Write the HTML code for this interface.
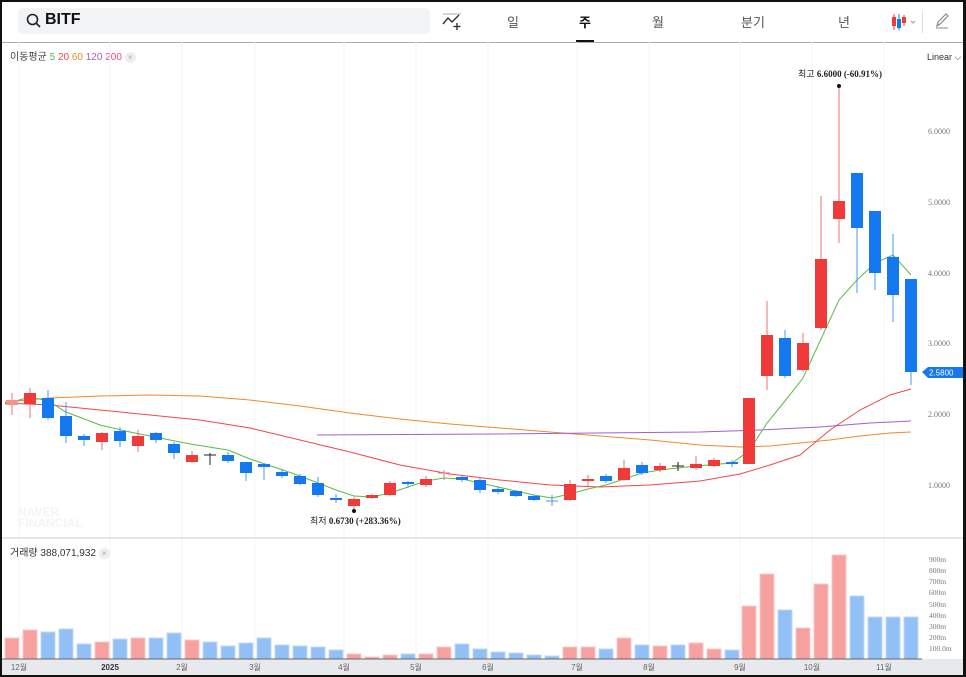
<!DOCTYPE html>
<html><head><meta charset="utf-8"><style>
*{margin:0;padding:0;box-sizing:border-box}
html,body{width:966px;height:677px;overflow:hidden;background:#111}
#f{position:absolute;left:2px;top:2px;width:961px;height:673px;background:#fff;overflow:hidden;font-family:"Liberation Sans","Noto Sans CJK KR",sans-serif}
.t{position:absolute;font-size:11px;color:#333}
</style></head><body><div id="f">
<div style="position:absolute;left:16px;top:6px;width:412px;height:26px;background:#f2f3f5;border-radius:5px"></div>
<svg style="position:absolute;left:24px;top:11px" width="16" height="16" viewBox="0 0 16 16"><circle cx="6.5" cy="6.5" r="5" fill="none" stroke="#222" stroke-width="1.6"/><line x1="10.2" y1="10.2" x2="14" y2="14" stroke="#222" stroke-width="1.6"/></svg>
<div class="t" style="left:43px;top:9px;font-size:16px;font-weight:bold;color:#111">BITF</div>
<svg style="position:absolute;left:440px;top:10px" width="22" height="20" viewBox="0 0 22 20"><line x1="1" y1="2" x2="19" y2="2" stroke="#aaa"/><polyline points="1,12 6,6 10,10 17,3" fill="none" stroke="#333" stroke-width="1.4"/><line x1="15" y1="11" x2="15" y2="18" stroke="#333" stroke-width="1.4"/><line x1="11.5" y1="14.5" x2="18.5" y2="14.5" stroke="#333" stroke-width="1.4"/></svg>
<div class="t" style="left:505px;top:10px;font-size:13px;color:#555">일</div>
<div class="t" style="left:577px;top:10px;font-size:13px;color:#111;font-weight:bold">주</div>
<div style="position:absolute;left:574px;top:38px;width:18px;height:3px;background:#111"></div>
<div class="t" style="left:650px;top:10px;font-size:13px;color:#555">월</div>
<div class="t" style="left:739px;top:10px;font-size:13px;color:#555">분기</div>
<div class="t" style="left:836px;top:10px;font-size:13px;color:#555">년</div>
<svg style="position:absolute;left:888px;top:10px" width="30" height="20"><line x1="4" y1="2" x2="4" y2="18" stroke="#f03a3a"/><rect x="2" y="5" width="4" height="9" fill="#f03a3a"/><line x1="9" y1="2" x2="9" y2="18" stroke="#1478f0"/><rect x="7" y="7" width="4" height="9" fill="#1478f0"/><line x1="14" y1="3" x2="14" y2="14" stroke="#f03a3a"/><rect x="12" y="5" width="4" height="6" fill="#f03a3a"/><polyline points="21,9 23,11 25,9" fill="none" stroke="#999"/></svg>
<div style="position:absolute;left:920px;top:9px;width:1px;height:22px;background:#ddd"></div>
<svg style="position:absolute;left:932px;top:10px" width="16" height="18"><path d="M3 14 L4 10 L12 2 L14 4 L6 12 Z" fill="none" stroke="#888" stroke-width="1.2"/><line x1="2" y1="16" x2="14" y2="16" stroke="#888"/></svg>
<div style="position:absolute;left:0;top:40px;width:961px;height:1px;background:#aaa"></div>
<div class="t" style="left:8px;top:46px;font-size:10px;color:#444">이동평균 <span style="color:#5cba47">5</span> <span style="color:#f04848">20</span> <span style="color:#f08a2a">60</span> <span style="color:#a060d0">120</span> <span style="color:#e84b8a">200</span> <span style="display:inline-block;width:11px;height:11px;border-radius:6px;background:#eee;color:#aaa;font-size:8px;text-align:center;line-height:11px">×</span></div>
<div class="t" style="left:925px;top:50px;font-size:9px;color:#333">Linear ⌵</div>
<svg style="position:absolute;left:-2px;top:-2px" width="966" height="677">
<g stroke="#f6f6f6" stroke-width="1">
<line x1="19" y1="42" x2="19" y2="659"/><line x1="110" y1="42" x2="110" y2="659"/><line x1="182" y1="42" x2="182" y2="659"/><line x1="255" y1="42" x2="255" y2="659"/><line x1="344" y1="42" x2="344" y2="659"/><line x1="416" y1="42" x2="416" y2="659"/><line x1="488" y1="42" x2="488" y2="659"/><line x1="577" y1="42" x2="577" y2="659"/><line x1="649" y1="42" x2="649" y2="659"/><line x1="740" y1="42" x2="740" y2="659"/><line x1="812" y1="42" x2="812" y2="659"/><line x1="884" y1="42" x2="884" y2="659"/>
</g>
<g font-family="Liberation Serif,serif" font-size="8" fill="#777">
<text x="928" y="134">6.0000</text><text x="928" y="205">5.0000</text><text x="928" y="276">4.0000</text><text x="928" y="346">3.0000</text><text x="928" y="417">2.0000</text><text x="928" y="488">1.0000</text>
</g>
<text x="18" y="516" font-size="12" font-weight="bold" fill="#f4f4f4" font-family="Liberation Sans">NAVER</text>
<text x="18" y="527" font-size="12" font-weight="bold" fill="#f4f4f4" font-family="Liberation Sans">FINANCIAL</text>
<polyline fill="none" stroke="#f08a2a" stroke-width="1" points="5,402 50,398 100,396 150,395 200,396 250,400 300,406 350,413 400,419 450,424 500,428 550,432 600,436 650,440 700,445 740,447 770,446 800,443 830,440 860,436 890,433 911,432"/>
<polyline fill="none" stroke="#a060d0" stroke-width="1" points="317,435 500,434 700,432 760,430 820,427 870,423 911,421"/>
<polyline fill="none" stroke="#f04848" stroke-width="1" points="5,403 50,405 100,410 150,415 200,420 250,428 300,440 350,452 400,465 450,474 500,480 550,485 600,487 650,485 700,481 740,474 770,465 800,455 830,430 860,410 890,395 911,389"/>
<polyline fill="none" stroke="#5cba47" stroke-width="1" points="5,404 30,397 48,401 66,412 100,425 130,432 160,438 190,444 228,450 250,459 280,469 300,476 318,483 336,490 354,496 372,497 390,493 408,487 426,481 444,478 462,479 480,483 498,487 516,491 534,495 552,498 570,494 588,489 606,485 624,479 642,473 660,470 696,466 732,463 749,451 767,423 785,401 803,378 821,339 839,300 857,280 875,263 893,255 911,275"/>
<g stroke-width="1">
<g stroke="#f07070" fill="#f03a3a">
<line x1="12" y1="393" x2="12" y2="415"/><rect x="6" y="400" width="12" height="5" stroke="none" fill="#f49090"/>
<line x1="30" y1="388" x2="30" y2="418"/><rect x="24" y="393" width="12" height="11" stroke="none"/>
<line x1="102" y1="432" x2="102" y2="450"/><rect x="96" y="433" width="12" height="9" stroke="none"/>
<line x1="138" y1="430" x2="138" y2="452"/><rect x="132" y="436" width="12" height="10" stroke="none"/>
<line x1="192" y1="451" x2="192" y2="463"/><rect x="186" y="455" width="12" height="7" stroke="none"/>
<line x1="354" y1="497" x2="354" y2="510"/><rect x="348" y="499" width="12" height="7" stroke="none"/>
<line x1="372" y1="494" x2="372" y2="499"/><rect x="366" y="495" width="12" height="3" stroke="none"/>
<line x1="390" y1="481" x2="390" y2="496"/><rect x="384" y="483" width="12" height="12" stroke="none"/>
<line x1="426" y1="476" x2="426" y2="487"/><rect x="420" y="479" width="12" height="6" stroke="none"/>
<line x1="444" y1="470" x2="444" y2="480"/><line x1="438" y1="473" x2="450" y2="473"/>
<line x1="570" y1="480" x2="570" y2="501"/><rect x="564" y="484" width="12" height="16" stroke="none"/>
<line x1="588" y1="475" x2="588" y2="486"/><rect x="582" y="479" width="12" height="2" stroke="none"/>
<line x1="624" y1="460" x2="624" y2="481"/><rect x="618" y="468" width="12" height="12" stroke="none"/>
<line x1="660" y1="463" x2="660" y2="472"/><rect x="654" y="466" width="12" height="4" stroke="none"/>
<line x1="696" y1="456" x2="696" y2="470"/><rect x="690" y="464" width="12" height="4" stroke="none"/>
<line x1="714" y1="458" x2="714" y2="467"/><rect x="708" y="460" width="12" height="6" stroke="none"/>
<rect x="743" y="398" width="12" height="66" stroke="none"/>
<line x1="767" y1="301" x2="767" y2="390"/><rect x="761" y="335" width="12" height="41" stroke="none"/>
<line x1="803" y1="333" x2="803" y2="372"/><rect x="797" y="343" width="12" height="27" stroke="none"/>
<line x1="821" y1="196" x2="821" y2="330"/><rect x="815" y="259" width="12" height="69" stroke="none"/>
<line x1="839" y1="86" x2="839" y2="243"/><rect x="833" y="201" width="12" height="18" stroke="none"/>
</g>
<g stroke="#4a9af5" fill="#1478f0">
<line x1="48" y1="390" x2="48" y2="420"/><rect x="42" y="398" width="12" height="20" stroke="none"/>
<line x1="66" y1="402" x2="66" y2="443"/><rect x="60" y="416" width="12" height="20" stroke="none"/>
<line x1="84" y1="434" x2="84" y2="446"/><rect x="78" y="436" width="12" height="4" stroke="none"/>
<line x1="120" y1="427" x2="120" y2="447"/><rect x="114" y="431" width="12" height="10" stroke="none"/>
<line x1="156" y1="432" x2="156" y2="443"/><rect x="150" y="433" width="12" height="7" stroke="none"/>
<line x1="174" y1="442" x2="174" y2="459"/><rect x="168" y="444" width="12" height="9" stroke="none"/>
<line x1="228" y1="452" x2="228" y2="463"/><rect x="222" y="455" width="12" height="6" stroke="none"/>
<line x1="246" y1="462" x2="246" y2="481"/><rect x="240" y="462" width="12" height="11" stroke="none"/>
<line x1="264" y1="463" x2="264" y2="480"/><rect x="258" y="464" width="12" height="3" stroke="none"/>
<line x1="282" y1="470" x2="282" y2="478"/><rect x="276" y="472" width="12" height="4" stroke="none"/>
<line x1="300" y1="474" x2="300" y2="485"/><rect x="294" y="476" width="12" height="8" stroke="none"/>
<line x1="318" y1="477" x2="318" y2="497"/><rect x="312" y="483" width="12" height="12" stroke="none"/>
<line x1="336" y1="494" x2="336" y2="503"/><rect x="330" y="498" width="12" height="2" stroke="none"/>
<line x1="408" y1="481" x2="408" y2="488"/><rect x="402" y="482" width="12" height="2" stroke="none"/>
<line x1="462" y1="475" x2="462" y2="482"/><rect x="456" y="477" width="12" height="3" stroke="none"/>
<line x1="480" y1="478" x2="480" y2="493"/><rect x="474" y="480" width="12" height="10" stroke="none"/>
<line x1="498" y1="486" x2="498" y2="494"/><rect x="492" y="489" width="12" height="3" stroke="none"/>
<line x1="516" y1="490" x2="516" y2="497"/><rect x="510" y="491" width="12" height="5" stroke="none"/>
<line x1="534" y1="495" x2="534" y2="501"/><rect x="528" y="496" width="12" height="4" stroke="none"/>
<line x1="552" y1="495" x2="552" y2="506"/><line x1="546" y1="501" x2="558" y2="501"/>
<line x1="606" y1="474" x2="606" y2="483"/><rect x="600" y="476" width="12" height="5" stroke="none"/>
<line x1="642" y1="462" x2="642" y2="475"/><rect x="636" y="465" width="12" height="8" stroke="none"/>
<line x1="732" y1="460" x2="732" y2="467"/><rect x="726" y="462" width="12" height="2" stroke="none"/>
<line x1="785" y1="330" x2="785" y2="378"/><rect x="779" y="338" width="12" height="38" stroke="none"/>
<line x1="857" y1="173" x2="857" y2="293"/><rect x="851" y="173" width="12" height="55" stroke="none"/>
<line x1="875" y1="211" x2="875" y2="290"/><rect x="869" y="211" width="12" height="62" stroke="none"/>
<line x1="893" y1="234" x2="893" y2="322"/><rect x="887" y="257" width="12" height="38" stroke="none"/>
<line x1="911" y1="279" x2="911" y2="385"/><rect x="905" y="279" width="12" height="93" stroke="none"/>
</g>
<g stroke="#222"><line x1="210" y1="453" x2="210" y2="465"/><line x1="204" y1="455" x2="216" y2="455"/><line x1="678" y1="462" x2="678" y2="471"/><line x1="672" y1="466" x2="684" y2="466"/></g>
</g>
<circle cx="839" cy="86" r="2" fill="#111"/><circle cx="354" cy="511" r="2" fill="#111"/>
<text x="798" y="77" font-size="9" fill="#222" font-family="Liberation Serif,'Noto Sans CJK KR',serif">최고 <tspan font-weight="bold">6.6000 (-60.91%)</tspan></text>
<text x="310" y="524" font-size="9" fill="#222" font-family="Liberation Serif,'Noto Sans CJK KR',serif">최저 <tspan font-weight="bold">0.6730 (+283.36%)</tspan></text>
<path d="M922 372 L928 367 L966 367 L966 378 L928 378 Z" fill="#1478f0"/>
<text x="929" y="375.5" font-size="8" fill="#fff" font-family="Liberation Sans">2.5800</text>
<line x1="0" y1="538" x2="966" y2="538" stroke="#ccc"/>
<g font-family="Liberation Serif,serif" font-size="7.5" fill="#777">
<text x="929" y="562">900m</text><text x="929" y="573">800m</text><text x="929" y="584">700m</text><text x="929" y="595">600m</text><text x="929" y="607">500m</text><text x="929" y="618">400m</text><text x="929" y="629">300m</text><text x="929" y="640">200m</text><text x="929" y="651">100.0m</text>
</g>
<g fill="#f7a0a0" stroke="#fbc8c8">
<rect x="5" y="638" width="14" height="21"/><rect x="23" y="630" width="14" height="29"/><rect x="95" y="642" width="14" height="17"/><rect x="131" y="638" width="14" height="21"/><rect x="185" y="640" width="14" height="19"/><rect x="347" y="654" width="14" height="5"/><rect x="365" y="657" width="14" height="2"/><rect x="383" y="655" width="14" height="4"/><rect x="419" y="654" width="14" height="5"/><rect x="437" y="647" width="14" height="12"/><rect x="563" y="647" width="14" height="12"/><rect x="581" y="647" width="14" height="12"/><rect x="617" y="638" width="14" height="21"/><rect x="653" y="646" width="14" height="13"/><rect x="689" y="643" width="14" height="16"/><rect x="707" y="649" width="14" height="10"/><rect x="742" y="606" width="14" height="53"/><rect x="760" y="574" width="14" height="85"/><rect x="796" y="628" width="14" height="31"/><rect x="814" y="584" width="14" height="75"/><rect x="832" y="555" width="14" height="104"/>
</g>
<g fill="#93bff7" stroke="#c0daf9">
<rect x="41" y="632" width="14" height="27"/><rect x="59" y="629" width="14" height="30"/><rect x="77" y="644" width="14" height="15"/><rect x="113" y="639" width="14" height="20"/><rect x="149" y="638" width="14" height="21"/><rect x="167" y="633" width="14" height="26"/><rect x="203" y="642" width="14" height="17"/><rect x="221" y="646" width="14" height="13"/><rect x="239" y="643" width="14" height="16"/><rect x="257" y="638" width="14" height="21"/><rect x="275" y="645" width="14" height="14"/><rect x="293" y="646" width="14" height="13"/><rect x="311" y="647" width="14" height="12"/><rect x="329" y="650" width="14" height="9"/><rect x="401" y="654" width="14" height="5"/><rect x="455" y="644" width="14" height="15"/><rect x="473" y="649" width="14" height="10"/><rect x="491" y="652" width="14" height="7"/><rect x="509" y="653" width="14" height="6"/><rect x="527" y="655" width="14" height="4"/><rect x="545" y="656" width="14" height="3"/><rect x="599" y="649" width="14" height="10"/><rect x="635" y="645" width="14" height="14"/><rect x="671" y="645" width="14" height="14"/><rect x="725" y="650" width="14" height="9"/><rect x="778" y="610" width="14" height="49"/><rect x="850" y="596" width="14" height="63"/><rect x="868" y="617" width="14" height="42"/><rect x="886" y="617" width="14" height="42"/><rect x="904" y="617" width="14" height="42"/>
</g>
<rect x="0" y="659" width="966" height="18" fill="#e8e9ec"/>
<line x1="0" y1="659" x2="922" y2="659" stroke="#666"/>
<g font-family="Liberation Sans,'Noto Sans CJK KR',sans-serif" font-size="8" fill="#666" text-anchor="middle">
<text x="19" y="670">12월</text><text x="110" y="670" font-weight="bold" fill="#333">2025</text><text x="182" y="670">2월</text><text x="255" y="670">3월</text><text x="344" y="670">4월</text><text x="416" y="670">5월</text><text x="488" y="670">6월</text><text x="577" y="670">7월</text><text x="649" y="670">8월</text><text x="740" y="670">9월</text><text x="812" y="670">10월</text><text x="884" y="670">11월</text>
</g>
</svg>
<div class="t" style="left:8px;top:542px;font-size:10px;color:#333">거래량 388,071,932 <span style="display:inline-block;width:11px;height:11px;border-radius:6px;background:#eee;color:#aaa;font-size:8px;text-align:center;line-height:11px">×</span></div>
</div></body></html>
